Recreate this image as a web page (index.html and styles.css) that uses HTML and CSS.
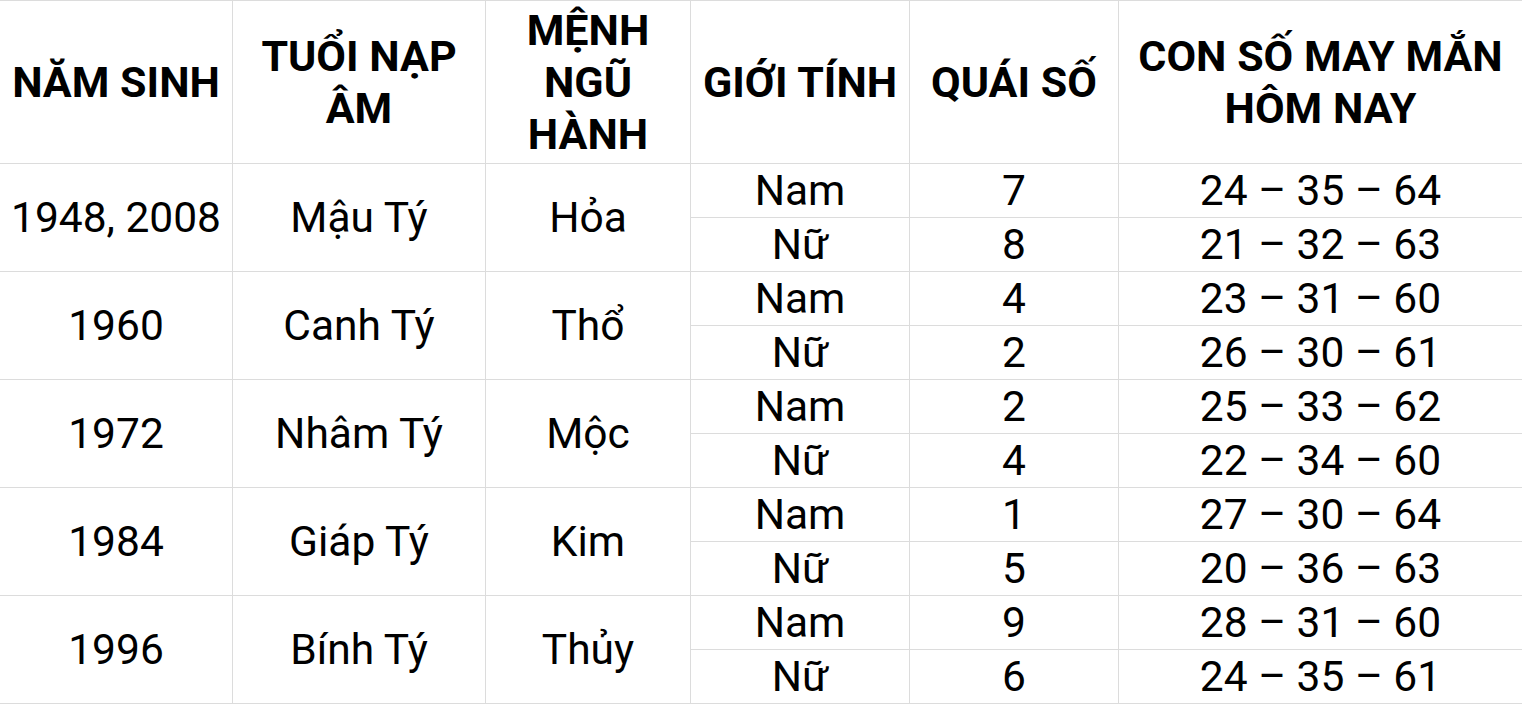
FILE: index.html
```html
<!DOCTYPE html>
<html lang="vi">
<head>
<meta charset="utf-8">
<title>Con số may mắn</title>
<link rel="stylesheet" href="styles.css">
</head>
<body>
<div class="grid">
  <div class="cell head">NĂM SINH</div>
  <div class="cell head">TUỔI NẠP<br>ÂM</div>
  <div class="cell head">MỆNH<br>NGŨ<br>HÀNH</div>
  <div class="cell head">GIỚI TÍNH</div>
  <div class="cell head">QUÁI SỐ</div>
  <div class="cell head">CON SỐ MAY MẮN<br>HÔM NAY</div>

  <div class="cell span2">1948, 2008</div>
  <div class="cell span2">Mậu Tý</div>
  <div class="cell span2">Hỏa</div>
  <div class="cell">Nam</div><div class="cell">7</div><div class="cell">24 – 35 – 64</div>
  <div class="cell">Nữ</div><div class="cell">8</div><div class="cell">21 – 32 – 63</div>

  <div class="cell span2">1960</div>
  <div class="cell span2">Canh Tý</div>
  <div class="cell span2">Thổ</div>
  <div class="cell">Nam</div><div class="cell">4</div><div class="cell">23 – 31 – 60</div>
  <div class="cell">Nữ</div><div class="cell">2</div><div class="cell">26 – 30 – 61</div>

  <div class="cell span2">1972</div>
  <div class="cell span2">Nhâm Tý</div>
  <div class="cell span2">Mộc</div>
  <div class="cell">Nam</div><div class="cell">2</div><div class="cell">25 – 33 – 62</div>
  <div class="cell">Nữ</div><div class="cell">4</div><div class="cell">22 – 34 – 60</div>

  <div class="cell span2">1984</div>
  <div class="cell span2">Giáp Tý</div>
  <div class="cell span2">Kim</div>
  <div class="cell">Nam</div><div class="cell">1</div><div class="cell">27 – 30 – 64</div>
  <div class="cell">Nữ</div><div class="cell">5</div><div class="cell">20 – 36 – 63</div>

  <div class="cell span2">1996</div>
  <div class="cell span2">Bính Tý</div>
  <div class="cell span2">Thủy</div>
  <div class="cell">Nam</div><div class="cell">9</div><div class="cell">28 – 31 – 60</div>
  <div class="cell">Nữ</div><div class="cell">6</div><div class="cell">24 – 35 – 61</div>
</div>
</body>
</html>
```
FILE: styles.css
```css
html, body {
  margin: 0;
  padding: 0;
  background: #fff;
}
body {
  font-family: Roboto, "Noto Sans", sans-serif;
  color: #000;
  overflow: hidden;
}
.grid {
  display: grid;
  width: 1522px;
  grid-template-columns: 232px 252px 204px 218px 208px 1fr;
  grid-template-rows: 162px repeat(10, 53px);
  gap: 1px;
  padding: 1px 0;
  background: #dcdcdc;
  box-sizing: border-box;
}
.cell {
  background: #fff;
  display: flex;
  align-items: center;
  justify-content: center;
  text-align: center;
  font-size: 42.5px;
  line-height: 52px;
  white-space: nowrap;
}
.head {
  font-weight: 700;
  font-size: 43px;
  line-height: 52px;
}
.span2 {
  grid-row: span 2;
}
```
